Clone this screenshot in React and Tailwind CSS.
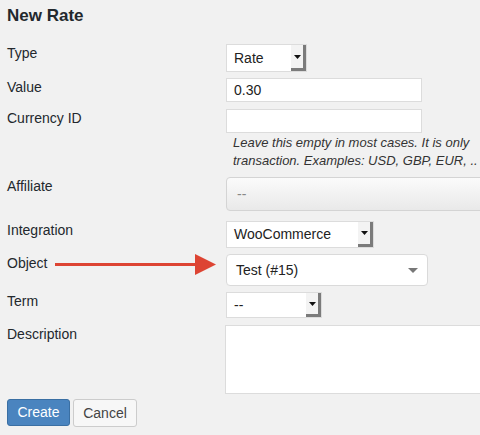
import React from 'react';

const Arrow = () => (
  <span className="flex h-full w-[15px] shrink-0 items-center justify-center border-r-[3px] border-b-[3px] border-[#7b7b7b] bg-[#f3f3f3]">
    <svg width="7" height="4" viewBox="0 0 7 4">
      <path d="M0 0h7L3.5 4z" fill="#111" />
    </svg>
  </span>
);

const OldSelect = ({ value, width, height }) => (
  <div className={`flex items-center border border-[#dcdcdc] bg-white ${width} ${height}`}>
    <span className="flex-1 pl-[7px] text-[14px] text-[#222]">{value}</span>
    <Arrow />
  </div>
);

const Label = ({ children }) => (
  <div className="w-[226px] shrink-0 pl-[7px] pt-[1px] text-[14px] leading-[16px] text-[#23282d]">
    {children}
  </div>
);

const App = () => {
  return (
    <div
      className="relative h-[435px] w-[480px] overflow-hidden bg-[#f1f1f1]"
      style={{ fontFamily: '"Liberation Sans", Arial, sans-serif' }}
    >
      <h1 className="h-[44px] pl-[7px] pt-[5px] text-[17px] font-bold leading-[22px] text-[#23282d]">
        New Rate
      </h1>

      {/* Type */}
      <div className="flex">
        <Label>Type</Label>
        <OldSelect value="Rate" width="w-[81px]" height="h-[28px]" />
      </div>

      {/* Value */}
      <div className="mt-[6px] flex">
        <Label>Value</Label>
        <div className="flex h-[24px] w-[196px] items-center border border-[#dcdcdc] bg-white pl-[7px] text-[14px] text-[#222]">
          0.30
        </div>
      </div>

      {/* Currency ID */}
      <div className="mt-[7px] flex">
        <Label>Currency ID</Label>
        <div className="min-w-0 flex-1">
          <div className="h-[24px] w-[196px] border border-[#dcdcdc] bg-white"></div>
          <div className="mt-[1px] pl-[7px] text-[13px] italic leading-[18px] text-[#333]">
            <div className="whitespace-nowrap">Leave this empty in most cases. It is only</div>
            <div className="whitespace-nowrap">transaction. Examples: USD, GBP, EUR, ..</div>
          </div>
        </div>
      </div>

      {/* Affiliate */}
      <div className="mt-[7px] flex">
        <Label>Affiliate</Label>
        <div className="flex h-[34px] w-[320px] shrink-0 items-center rounded-[4px] border border-[#d4d4d4] bg-gradient-to-b from-[#fbfbfb] to-[#e9e9e9] pl-[10px] text-[14px] text-[#888]">
          --
        </div>
      </div>

      {/* Integration */}
      <div className="mt-[10px] flex">
        <Label>Integration</Label>
        <OldSelect value="WooCommerce" width="w-[148px]" height="h-[27px]" />
      </div>

      {/* Object */}
      <div className="mt-[6px] flex">
        <Label>Object</Label>
        <div className="flex h-[32px] w-[202px] items-center justify-between rounded-[4px] border border-[#dadada] bg-white pl-[9px] pr-[9px] text-[14px] text-[#222]">
          <span>Test (#15)</span>
          <svg width="10" height="5" viewBox="0 0 10 5">
            <path d="M0 0h10L5 5z" fill="#777" />
          </svg>
        </div>
      </div>

      {/* Term */}
      <div className="mt-[6px] flex">
        <Label>Term</Label>
        <OldSelect value="--" width="w-[96px]" height="h-[26px]" />
      </div>

      {/* Description */}
      <div className="mt-[7px] flex">
        <Label>Description</Label>
        <div className="-ml-[1px] h-[69px] w-[300px] shrink-0 border border-[#dcdcdc] bg-white"></div>
      </div>

      <div className="mt-[5px] flex gap-[3px] pl-[7px]">
        <button className="h-[27px] w-[63px] rounded-[3px] border border-[#3a6fa3] bg-[#4a84bf] text-[14px] text-white">
          Create
        </button>
        <button className="h-[28px] w-[64px] rounded-[3px] border border-[#cccccc] bg-[#f7f7f7] text-[14px] text-[#444]">
          Cancel
        </button>
      </div>

      {/* annotation arrow */}
      <svg className="absolute left-[55px] top-[254px]" width="162" height="21" viewBox="0 0 162 21">
        <rect x="0" y="9" width="142" height="3" fill="#dd4433" />
        <path d="M140 0L161 10.5L140 21z" fill="#dd4433" />
      </svg>
    </div>
  );
};

export default App;
